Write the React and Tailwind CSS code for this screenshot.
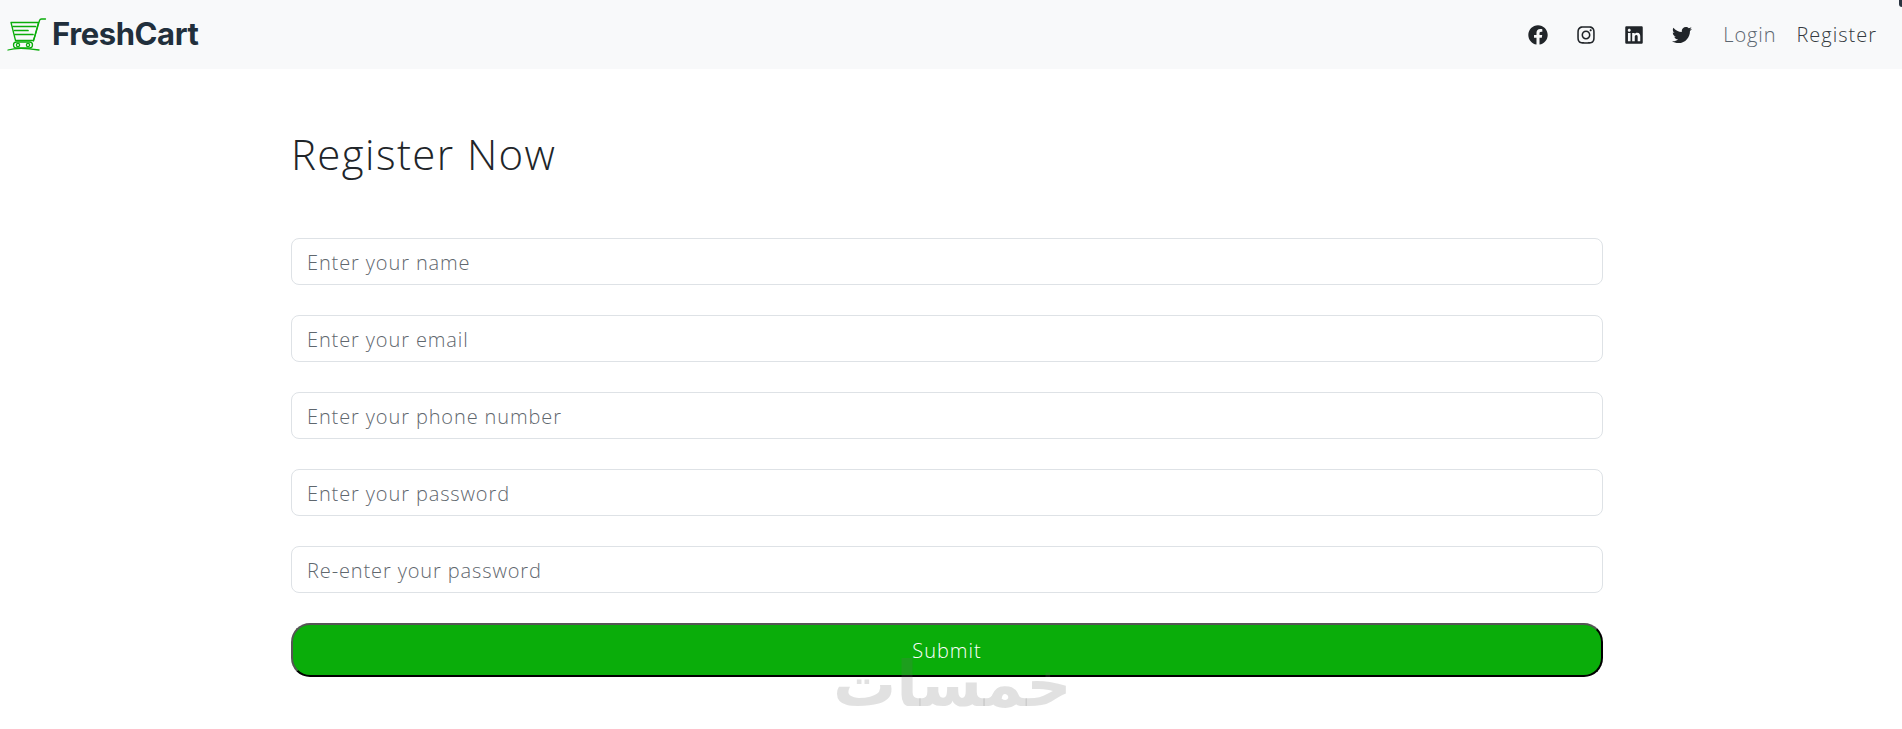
import { FaFacebook, FaInstagram, FaLinkedin, FaTwitter } from 'react-icons/fa'

const fields = [
  'Enter your name',
  'Enter your email',
  'Enter your phone number',
  'Enter your password',
  'Re-enter your password',
]

// green cart from the logo
const CartLogo = () => (
  <svg width="40" height="33" viewBox="0 0 40 33" fill="none" stroke="#0aad0a" strokeWidth="1.3" strokeLinecap="round" strokeLinejoin="round">
    <path d="M38.5 1h-4c-1 0-1.7.6-2 1.5L26.5 23" />
    <path d="M4 4.5h27.5L27.5 19l-1.2 3.5H8.5L4 4.5z" />
    <path d="M6 8.5h22.5M7.5 12.5h13.5M8 16.5h18" strokeWidth="1.7" />
    <rect x="6.5" y="24" width="19" height="6" rx="3" />
    <circle cx="11" cy="27" r="1.6" />
    <circle cx="21" cy="27" r="1.6" />
    <path d="M1 32c6-1.8 18-2 31 0" />
  </svg>
)

export default function App() {
  return (
    <div className="relative min-h-[729px] overflow-hidden bg-white font-['Open_Sans',sans-serif]">
      <div className="absolute right-0 top-0 h-[7px] w-[3px] rounded-bl-full bg-[#2a3440]" />
      <nav className="flex h-[69px] items-center justify-between bg-[#f8f9fa] pl-[7px] pr-[25px]">
        <a className="flex items-center gap-[5px]">
          <CartLogo />
          <span className="font-['Inter',sans-serif] text-[31px] font-bold tracking-[-0.4px] text-[#212f3c]">FreshCart</span>
        </a>
        <div className="flex items-center text-[#212529]">
          <div className="flex items-center gap-[28px]">
            <FaFacebook className="h-[20px] w-[20px]" />
            <FaInstagram className="h-[20px] w-[20px]" />
            <FaLinkedin className="h-[20px] w-[20px]" />
            <FaTwitter className="h-[20px] w-[20px]" />
          </div>
          <a className="ml-[31px] text-[20px] font-light tracking-[0.9px] text-[#5c6670]">Login</a>
          <a className="ml-[20px] text-[20px] font-light tracking-[1px] text-[#343a40]">Register</a>
        </div>
      </nav>

      <main className="ml-[291px] w-[1312px] pt-[61px]">
        <h2 className="text-[42px] font-light leading-[48px] tracking-[1.4px] text-[#212529]">Register Now</h2>
        <form className="mt-[60px] flex flex-col gap-[30px]">
          {fields.map((label) => (
            <input
              key={label}
              placeholder={label}
              className="h-[47px] w-full rounded-[8px] border border-[#dee2e6] bg-white px-[15px] pt-[2px] text-[20px] font-light tracking-[0.88px] text-[#212529] placeholder:text-[#5f676e]"
            />
          ))}
          <button type="button" className="h-[54px] w-full rounded-[19px] border-2 border-b-black border-l-[#555] border-r-black border-t-[#555] bg-[#0aad0a] pt-[2px] text-[20px] font-light tracking-[1px] text-white">
            Submit
          </button>
        </form>
      </main>

      <span dir="rtl" className="absolute left-[833px] top-[645px] font-['DejaVu_Sans',sans-serif] text-[63px] font-bold leading-[80px] text-[#6b6b6b]/20">
        خمسات
      </span>
    </div>
  )
}
